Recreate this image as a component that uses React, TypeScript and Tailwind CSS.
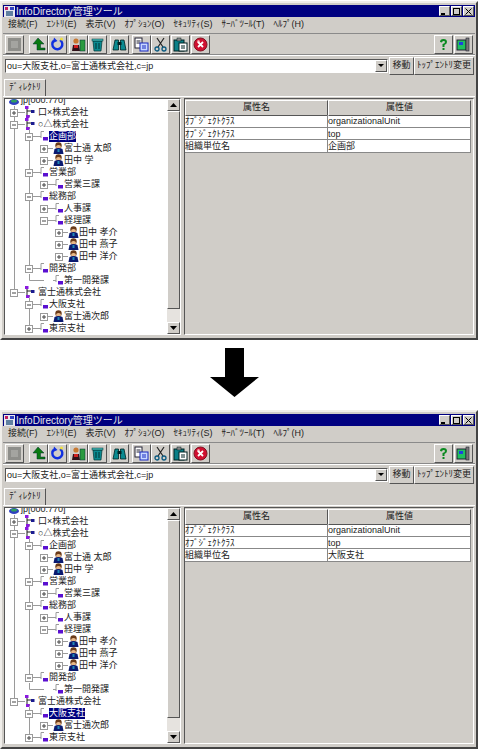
import { ReactNode } from "react";

const raised = "border border-t-white border-l-white border-r-[#555] border-b-[#555]";
const sunken = "border border-t-[#555] border-l-[#555] border-r-white border-b-white";

interface Row {
	label: string;
	level: number;
	box?: "plus" | "minus";
	kind: "root" | "org" | "ou" | "person";
	spine?: "full" | "half" | "none";
	second?: "full" | "half" | "none";
	drop?: boolean;
}

const rows: Row[] = [
	{ label: "jp[000.770]", level: 0, kind: "root", spine: "none", second: "none" },
	{ label: "口×株式会社", level: 1, box: "plus", kind: "org", spine: "full", second: "none" },
	{ label: "○△株式会社", level: 1, box: "minus", kind: "org", spine: "full", second: "none" },
	{ label: "企画部", level: 2, box: "minus", kind: "ou", spine: "full", second: "full" },
	{ label: "富士通 太郎", level: 3, box: "plus", kind: "person", spine: "full", second: "full" },
	{ label: "田中 学", level: 3, box: "plus", kind: "person", spine: "full", second: "full" },
	{ label: "営業部", level: 2, box: "minus", kind: "ou", spine: "full", second: "full" },
	{ label: "営業三課", level: 3, box: "plus", kind: "ou", spine: "full", second: "full" },
	{ label: "総務部", level: 2, box: "minus", kind: "ou", spine: "full", second: "full" },
	{ label: "人事課", level: 3, box: "plus", kind: "ou", spine: "full", second: "full" },
	{ label: "経理課", level: 3, box: "minus", kind: "ou", spine: "full", second: "full" },
	{ label: "田中 孝介", level: 4, box: "plus", kind: "person", spine: "full", second: "full" },
	{ label: "田中 燕子", level: 4, box: "plus", kind: "person", spine: "full", second: "full" },
	{ label: "田中 洋介", level: 4, box: "plus", kind: "person", spine: "full", second: "full" },
	{ label: "開発部", level: 2, box: "minus", kind: "ou", spine: "full", second: "half" },
	{ label: "第一開発課", level: 3, kind: "ou", spine: "full", second: "none", drop: true },
	{ label: "富士通株式会社", level: 1, box: "minus", kind: "org", spine: "half", second: "none" },
	{ label: "大阪支社", level: 2, box: "minus", kind: "ou", spine: "none", second: "full" },
	{ label: "富士通次郎", level: 3, box: "plus", kind: "person", spine: "none", second: "full" },
	{ label: "東京支社", level: 2, box: "plus", kind: "ou", spine: "none", second: "half" },
];

// offsets inside the tree panel, one set per level
const boxX = [0, 8, 23, 38, 53];
const iconX = [3, 19, 32, 47, 62];
const textX = [17, 34, 45, 60, 75];

function RowIcon({ kind, x }: { kind: Row["kind"]; x: number }) {
	if (kind === "person") {
		return (
			<g transform={`translate(${x} 0)`}>
				<circle cx="5.5" cy="3.5" r="3.2" fill="#6a3a18" />
				<path d="M3.2 4 Q5.5 2 7.8 4 L7.8 6 L3.2 6 Z" fill="#e8b888" />
				<path d="M0.5 12 L1.5 7 Q5.5 5 9.5 7 L10.5 12 Z" fill="#0a1a70" />
				<rect x="4.5" y="7" width="2" height="3" fill="#2088b8" />
			</g>
		);
	}
	if (kind === "ou") {
		return (
			<g transform={`translate(${x} 0)`}>
				<path d="M0 6.5 H3 M3 1.5 V8 M3 1.5 H6" stroke="#9a9a9a" fill="none" />
				<rect x="5" y="7" width="5" height="3.5" fill="#5a10d0" />
			</g>
		);
	}
	if (kind === "org") {
		return (
			<g transform={`translate(${x} 0)`}>
				<path d="M2 2 V10 M2 5 H8 M2 10 H5" stroke="#202020" fill="none" />
				<rect x="0" y="0" width="3.5" height="3" fill="#8a18e0" />
				<rect x="6" y="4" width="3.5" height="3" fill="#1c1c90" />
				<rect x="1" y="9" width="3.5" height="3" fill="#8a18e0" />
			</g>
		);
	}
	return (
		<g transform={`translate(${x} 0)`}>
			<ellipse cx="5" cy="8" rx="5" ry="3" fill="#3040c0" />
			<ellipse cx="5" cy="7" rx="3" ry="1.5" fill="#30a060" />
		</g>
	);
}

function TreeGraphic({ row }: { row: Row }) {
	const bx = boxX[row.level];
	const width = textX[row.level] - 2;
	return (
		<svg width={width} height="12" className="shrink-0 block">
			{row.spine === "full" && <line x1="8.5" y1="0" x2="8.5" y2="12" stroke="#9a9a9a" />}
			{row.spine === "half" && <line x1="8.5" y1="0" x2="8.5" y2="6" stroke="#9a9a9a" />}
			{row.second === "full" && <line x1="23.5" y1="0" x2="23.5" y2="12" stroke="#9a9a9a" />}
			{row.second === "half" && <line x1="23.5" y1="0" x2="23.5" y2="6" stroke="#9a9a9a" />}
			{row.drop && <path d="M23.5 0 V6.5 H38" stroke="#9a9a9a" fill="none" />}
			{row.box && (
				<g>
					<line x1={bx} y1="6.5" x2={iconX[row.level]} y2="6.5" stroke="#9a9a9a" />
					<rect x={bx - 3.5} y="3.5" width="7" height="7" fill="#fff" stroke="#9a9a9a" />
					<line x1={bx - 2} y1="7" x2={bx + 2} y2="7" stroke="#444" />
					{row.box === "plus" && <line x1={bx} y1="5" x2={bx} y2="9" stroke="#444" />}
				</g>
			)}
			<RowIcon kind={row.kind} x={iconX[row.level]} />
		</svg>
	);
}

function TreePanel({ selected }: { selected: string }) {
	return (
		<div className={`w-[177px] shrink-0 flex bg-white ${sunken} overflow-hidden`}>
			<div className="flex-1 overflow-hidden pl-[1px]">
				<div className="-mt-[5px]">
					{rows.map((row) => (
						<div key={row.label} className="flex items-center h-[12px] whitespace-nowrap text-[#222]">
							<TreeGraphic row={row} />
							<span className={row.label === selected ? "bg-[#000080] text-white leading-[11px]" : "leading-[11px]"}>
								{row.label}
							</span>
						</div>
					))}
				</div>
			</div>
			<div className="w-[13px] shrink-0 flex flex-col">
				<ScrollButton up />
				<div className={`h-[198px] bg-[#d0cdc8] ${raised}`} />
				<div className="flex-1 bg-[#e6e3df]" />
				<ScrollButton />
			</div>
		</div>
	);
}

function ScrollButton({ up }: { up?: boolean }) {
	return (
		<div className={`h-[12px] shrink-0 flex items-center justify-center bg-[#d0cdc8] ${raised}`}>
			<svg width="7" height="4">
				<path d={up ? "M3.5 0 L7 4 H0 Z" : "M0 0 H7 L3.5 4 Z"} fill="#000" />
			</svg>
		</div>
	);
}

function AttrTable({ unit }: { unit: string }) {
	const data = [
		["ｵﾌﾞｼﾞｪｸﾄｸﾗｽ", "organizationalUnit"],
		["ｵﾌﾞｼﾞｪｸﾄｸﾗｽ", "top"],
		["組織単位名", unit],
	];
	return (
		<div className={`flex-1 ${sunken} pt-[1px]`}>
			<div className="w-[286px] text-[#222]">
				<div className="grid grid-cols-[143px_143px] h-[15px]">
					<div className={`${raised} flex items-center justify-center`}>属性名</div>
					<div className={`${raised} flex items-center justify-center`}>属性値</div>
				</div>
				{data.map(([name, value], i) => (
					<div key={i} className="grid grid-cols-[143px_143px] h-[12.5px] bg-white border-b border-[#888]">
						<div className="border-r border-[#888] leading-[12px] whitespace-nowrap overflow-hidden">{name}</div>
						<div className="border-r border-[#888] leading-[12px] whitespace-nowrap overflow-hidden">{value}</div>
					</div>
				))}
			</div>
		</div>
	);
}

function ToolButton({ children, className = "" }: { children: ReactNode; className?: string }) {
	return (
		<div className={`w-[19px] h-[19px] shrink-0 flex items-center justify-center ${raised} ${className}`}>
			<svg width="15" height="15" viewBox="0 0 15 15">
				{children}
			</svg>
		</div>
	);
}

function Toolbar() {
	return (
		<div className="h-[21px] shrink-0 flex items-center pl-[2px] pr-[2px] border-b border-[#8a8a8a]">
			<ToolButton>
				<rect x="1" y="1" width="13" height="13" fill="#8e8e8a" />
				<rect x="4" y="4" width="7" height="7" fill="#a4a4a0" />
			</ToolButton>
			<ToolButton className="ml-[5px]">
				<path d="M7 1 L13 7 H9.5 V11 H14 V13 H6 V7 H2 Z" fill="#0a7a10" stroke="#033" strokeWidth="0.5" />
			</ToolButton>
			<ToolButton>
				<path d="M10 3 A5 5 0 1 1 4 3.5" fill="none" stroke="#1030e0" strokeWidth="2.4" />
				<path d="M4 0.5 L7.5 4 L3 6 Z" fill="#1030e0" />
				<circle cx="11.5" cy="2" r="1.5" fill="#f0e040" />
			</ToolButton>
			<ToolButton className="ml-[2px]">
				<circle cx="5" cy="4" r="2.6" fill="#c87830" />
				<path d="M1 14 L2 8 H8 L9 14 Z" fill="#301018" />
				<rect x="9" y="3" width="5" height="11" fill="#2a9a40" stroke="#033" strokeWidth="0.5" />
				<rect x="3" y="8" width="4" height="3" fill="#d02020" />
			</ToolButton>
			<ToolButton>
				<path d="M3 4 H12 L11 14 H4 Z" fill="#0a8a90" stroke="#033" strokeWidth="0.7" />
				<rect x="2" y="2" width="11" height="2" fill="#40b8b8" stroke="#033" strokeWidth="0.5" />
				<path d="M6 6 V12 M9 6 V12" stroke="#033" />
			</ToolButton>
			<ToolButton className="ml-[3px]">
				<path d="M1 13 L3 3 H6.5 V13 Z M14 13 L12 3 H8.5 V13 Z" fill="#0a8a90" stroke="#022" strokeWidth="0.8" />
				<rect x="5.5" y="5" width="4" height="3" fill="#022" />
			</ToolButton>
			<ToolButton className="ml-[3px]">
				<rect x="1" y="1" width="7" height="10" fill="#fff" stroke="#223" />
				<path d="M2.5 4 H6.5 M2.5 6 H6.5" stroke="#223" />
				<rect x="6" y="6" width="8" height="8" fill="#c8d8ff" stroke="#1828c0" />
				<path d="M8 9 H12 M8 11 H12" stroke="#1828c0" />
			</ToolButton>
			<ToolButton>
				<path d="M4 1 L10 10 M11 1 L5 10" stroke="#222" strokeWidth="1.2" />
				<circle cx="4" cy="12" r="2" fill="none" stroke="#0a5a80" strokeWidth="1.3" />
				<circle cx="11" cy="12" r="2" fill="none" stroke="#0a5a80" strokeWidth="1.3" />
			</ToolButton>
			<ToolButton className="ml-[1px]">
				<rect x="1" y="3" width="10" height="11" fill="#0a8088" stroke="#022" />
				<rect x="4" y="1" width="4" height="3" fill="#888" stroke="#022" strokeWidth="0.5" />
				<rect x="6" y="6" width="8" height="8" fill="#fff" stroke="#022" />
				<path d="M8 9 H12 M8 11 H12" stroke="#022" />
			</ToolButton>
			<ToolButton className="ml-[1px]">
				<circle cx="7.5" cy="7.5" r="6.5" fill="#d01030" stroke="#801020" />
				<circle cx="5.5" cy="4.5" r="1.5" fill="#f8a0a8" />
				<path d="M5 5 L10 10 M10 5 L5 10" stroke="#fff" strokeWidth="1.8" />
			</ToolButton>
			<div className="flex-1" />
			<ToolButton>
				<path d="M4 5 Q4 2 7.5 2 Q11 2 11 5 Q11 7 8.5 8 V10 H6.5 V7 Q9 6.5 9 5 Q9 4 7.5 4 Q6 4 6 5.5 Z" fill="#0a8a20" />
				<rect x="6.5" y="11" width="2" height="2" fill="#0a8a20" />
			</ToolButton>
			<ToolButton className="ml-[1px]">
				<rect x="1" y="3" width="9" height="10" fill="#20c060" stroke="#223" />
				<rect x="3" y="5" width="4" height="3" fill="#2040e0" />
				<rect x="10" y="1" width="3" height="13" fill="#777" stroke="#223" strokeWidth="0.6" />
			</ToolButton>
		</div>
	);
}

function AppWindow({ address, selected, unit }: { address: string; selected: string; unit: string }) {
	return (
		<div className="w-[478px] h-[339px] flex flex-col bg-[#d0cdc8] text-[9px] text-[#222] font-['Liberation_Sans','Noto_Sans_CJK_JP',sans-serif] border-2 border-t-[#f0eeea] border-l-[#f0eeea] border-r-[#444] border-b-[#444] p-[1px]">
			<div className="h-[12px] shrink-0 flex items-center bg-[#000080] text-[#e8e8e8] text-[10px] mt-[1px]">
				<svg width="11" height="11" className="ml-[1px] mr-[1px] shrink-0">
					<rect width="11" height="11" fill="#e8e8f0" />
					<rect x="1" y="1" width="3" height="3" fill="#c02060" />
					<rect x="6" y="1" width="4" height="3" fill="#3040c0" />
					<rect x="2" y="5" width="7" height="5" fill="#6080a0" />
				</svg>
				<span className="whitespace-nowrap">InfoDirectory管理ツール</span>
				<div className="flex-1" />
				{["min", "max", "close"].map((b) => (
					<div key={b} className={`w-[11px] h-[10px] ml-[1px] last:mr-[1px] bg-[#d0cdc8] ${raised} flex items-center justify-center`}>
						<svg width="7" height="7">
							{b === "min" && <rect x="0" y="5" width="4" height="2" fill="#000" />}
							{b === "max" && <rect x="0.5" y="0.5" width="6" height="6" fill="none" stroke="#000" />}
							{b === "close" && <path d="M0.5 0.5 L6.5 6.5 M6.5 0.5 L0.5 6.5" stroke="#000" />}
						</svg>
					</div>
				))}
			</div>
			<div className="h-[17px] shrink-0 flex items-center gap-[9px] pl-[5px] pb-[1px] whitespace-nowrap border-b border-[#8a8a8a]">
				<span>接続(F)</span>
				<span>ｴﾝﾄﾘ(E)</span>
				<span>表示(V)</span>
				<span>ｵﾌﾟｼｮﾝ(O)</span>
				<span>ｾｷｭﾘﾃｨ(S)</span>
				<span>ｻｰﾊﾞﾂｰﾙ(T)</span>
				<span>ﾍﾙﾌﾟ(H)</span>
			</div>
			<Toolbar />
			<div className="h-[20px] shrink-0 flex items-center pl-[2px] pr-[1px] border-t border-white">
				<div className={`w-[383px] h-[14px] flex bg-white ${sunken}`}>
					<div className="flex-1 pl-[1px] leading-[12px] whitespace-nowrap overflow-hidden">{address}</div>
					<div className={`w-[12px] bg-[#d0cdc8] ${raised} flex items-center justify-center`}>
						<svg width="6" height="3">
							<path d="M0 0 H6 L3 3 Z" fill="#000" />
						</svg>
					</div>
				</div>
				<div className={`w-[25px] h-[18px] ml-[1px] flex items-center justify-center ${raised}`}>移動</div>
				<div className={`w-[60px] h-[18px] flex items-center justify-center whitespace-nowrap ${raised}`}>ﾄｯﾌﾟｴﾝﾄﾘ変更</div>
			</div>
			<div className="h-[22px] shrink-0 flex items-end pl-[1px] border-b border-white">
				<div className="w-[42px] h-[17px] flex items-center justify-center border border-b-0 border-t-white border-l-white border-r-[#555] bg-[#d0cdc8] whitespace-nowrap">
					ﾃﾞｨﾚｸﾄﾘ
				</div>
			</div>
			<div className="flex-1 min-h-0 flex gap-[3px] pt-[1px] pb-[2px] pl-[1px] pr-[1px]">
				<TreePanel selected={selected} />
				<AttrTable unit={unit} />
			</div>
		</div>
	);
}

export default function App() {
	return (
		<div className="w-[480px] h-[750px] bg-white overflow-hidden pt-[1px]">
			<AppWindow address="ou=大阪支社,o=富士通株式会社,c=jp" selected="企画部" unit="企画部" />
			<div className="flex justify-center pr-[11px] pt-[8px] pb-[13px]">
				<svg width="49" height="49" className="block">
					<path d="M15 0 H34 V29 H49 L24.5 49 L0 29 H15 Z" fill="#000" />
				</svg>
			</div>
			<AppWindow address="ou=大阪支社,o=富士通株式会社,c=jp" selected="大阪支社" unit="大阪支社" />
		</div>
	);
}
